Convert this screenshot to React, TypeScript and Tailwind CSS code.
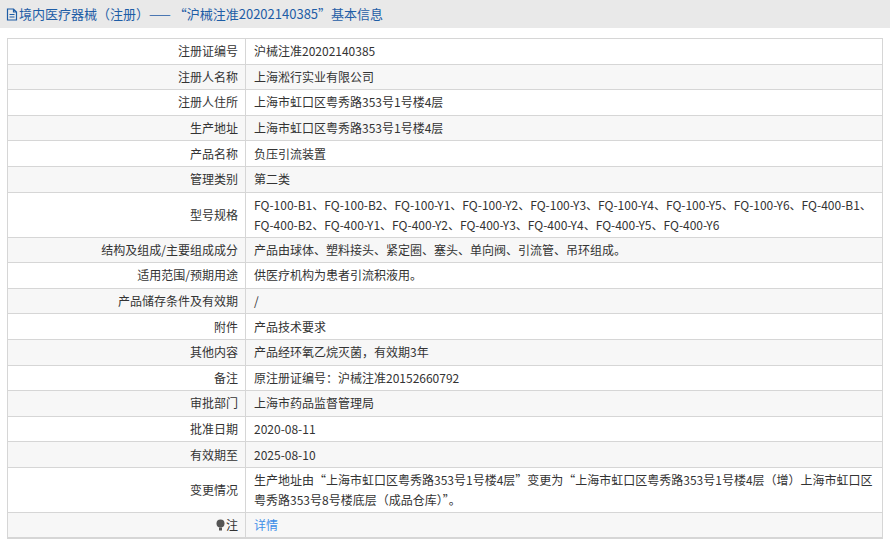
const rows: [string, string, number?][] = [
  ["注册证编号", "沪械注准20202140385"],
  ["注册人名称", "上海淞行实业有限公司"],
  ["注册人住所", "上海市虹口区粤秀路353号1号楼4层"],
  ["生产地址", "上海市虹口区粤秀路353号1号楼4层"],
  ["产品名称", "负压引流装置"],
  ["管理类别", "第二类"],
  ["型号规格", "FQ-100-B1、FQ-100-B2、FQ-100-Y1、FQ-100-Y2、FQ-100-Y3、FQ-100-Y4、FQ-100-Y5、FQ-100-Y6、FQ-400-B1、FQ-400-B2、FQ-400-Y1、FQ-400-Y2、FQ-400-Y3、FQ-400-Y4、FQ-400-Y5、FQ-400-Y6", 1],
  ["结构及组成/主要组成成分", "产品由球体、塑料接头、紧定圈、塞头、单向阀、引流管、吊环组成。"],
  ["适用范围/预期用途", "供医疗机构为患者引流积液用。"],
  ["产品储存条件及有效期", "/"],
  ["附件", "产品技术要求"],
  ["其他内容", "产品经环氧乙烷灭菌，有效期3年"],
  ["备注", "原注册证编号：沪械注准20152660792"],
  ["审批部门", "上海市药品监督管理局"],
  ["批准日期", "2020-08-11"],
  ["有效期至", "2025-08-10"],
  ["变更情况", "生产地址由“上海市虹口区粤秀路353号1号楼4层”变更为“上海市虹口区粤秀路353号1号楼4层（增）上海市虹口区粤秀路353号8号楼底层（成品仓库）”。", 1],
];

export default function App() {
  return (
    <div className="w-[890px] h-[542px] bg-white text-[12px] text-[#333] leading-[16px]" style={{ fontFamily: '"Noto Sans CJK SC", "Liberation Sans", sans-serif' }}>
      <div className="h-[28px] bg-[#e9e9e9] flex items-center px-[6px] text-[13px] text-[#1e5da6]">
        <svg width="12" height="13" viewBox="0 0 12 13" className="mr-[1px]"><path d="M1.5 1h6l3 3v8h-9z M7.5 1v3h3 M3.5 6.5h5 M3.5 9h5" fill="none" stroke="#1e5da6" strokeWidth="1.2" /></svg>
        <span>境内医疗器械（注册）—— “沪械注准20202140385”基本信息</span>
      </div>
      <div className="mx-[7px] mt-[10px] border-l border-r border-t border-[#d6d6d6]">
        {rows.map(([k, v, tall], i) => (
          <div key={k} className={`flex border-b border-[#d6d6d6] overflow-hidden ${tall ? "h-[45px]" : "h-[25.6px]"} ${i % 2 ? "bg-[#f7f7f7]" : "bg-white"}`}>
            <div className="w-[238px] shrink-0 border-r border-[#d6d6d6] pr-[7px] flex items-center justify-end">{k}</div>
            <div className={`flex-1 pl-[8px] pr-[4px] flex items-center break-all ${tall ? "leading-[20px]" : ""}`}>{v}</div>
          </div>
        ))}
        <div className="flex border-b-[2px] border-[#d6d6d6] bg-[#f7f7f7] h-[26px]">
          <div className="w-[238px] shrink-0 border-r border-[#d6d6d6] pr-[7px] flex items-center justify-end gap-[1px]">
            <svg width="9" height="12" viewBox="0 0 9 12"><circle cx="4.5" cy="4.5" r="4" fill="#555" /><rect x="3" y="8.5" width="3" height="3" fill="#555" /></svg>
            注
          </div>
          <div className="flex-1 pl-[8px] flex items-center text-[#3d8ee8]">详情</div>
        </div>
      </div>
    </div>
  );
}
